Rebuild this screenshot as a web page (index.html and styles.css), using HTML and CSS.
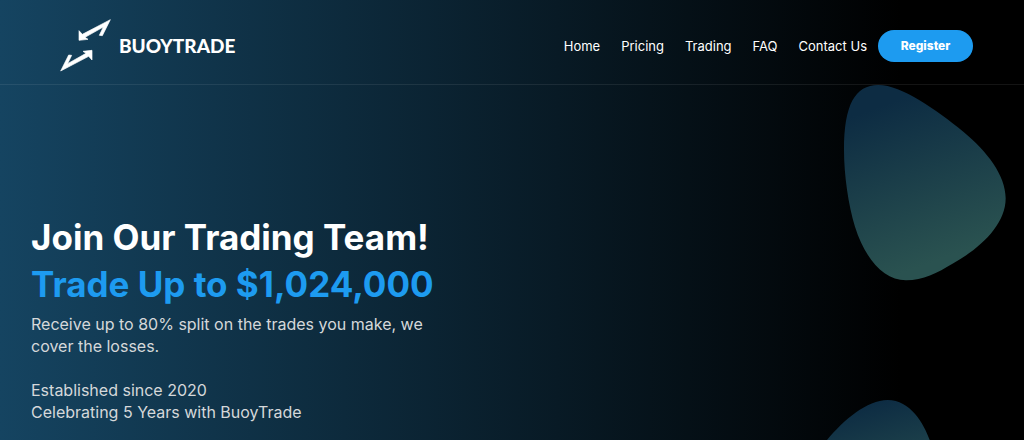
FILE: index.html
```
<!DOCTYPE html>
<html lang="en">
<head>
    <meta charset="UTF-8">
    <meta name="viewport" content="width=device-width, initial-scale=1.0">
    <title>BuoyTrade</title>
    <link rel="stylesheet" href="styles.css">
</head>
<body>
    <header class="header">
        <a href="#" class="logo">
            <svg class="logo-mark" viewBox="30 31 153 159" aria-hidden="true">
                <path d="M181 33 L157 81 L148 80 L160 55 L105 86 L114 92 L87 95 L87 66 L97 77 Z"/>
                <path d="M32 187 L56 139 L65 140 L53 165 L108 134 L99 128 L126 125 L126 154 L116 143 Z"/>
            </svg>
            <span class="logo-text">BUOYTRADE</span>
        </a>
        <div class="menu">
            <nav class="nav">
                <a href="#">Home</a>
                <a href="#">Pricing</a>
                <a href="#">Trading</a>
                <a href="#">FAQ</a>
                <a href="#">Contact Us</a>
            </nav>
            <button type="button" class="register">Register</button>
        </div>
    </header>

    <main class="hero">
        <svg class="blob blob-top" viewBox="72 30 486 587" aria-hidden="true">
            <defs>
                <linearGradient id="blobFill" x1="0.3" y1="0" x2="0.6" y2="1">
                    <stop offset="0.08" stop-color="#0d2c43"/>
                    <stop offset="0.9" stop-color="#2a5250"/>
                </linearGradient>
            </defs>
            <path fill="url(#blobFill)" d="M175 30 C245 30 350 105 430 170 C500 228 557 300 557 370 C557 450 480 520 400 565 C350 595 310 616 258 616 C190 616 135 550 105 455 C85 390 72 300 72 225 C72 90 105 30 175 30 Z"/>
        </svg>
        <svg class="blob blob-bottom" viewBox="14 60 408 381" aria-hidden="true">
            <path fill="url(#blobFill)" d="M262 60 C330 60 370 130 388 180 C420 270 430 400 350 420 C200 450 30 400 20 330 C10 280 50 220 80 180 C130 120 200 60 262 60 Z"/>
        </svg>

        <div class="hero-content">
            <h1>Join Our Trading Team!<br><span class="highlight">Trade Up to $1,024,000</span></h1>
            <p>Receive up to 80% split on the trades you make, we cover the losses.</p>
            <p>Established since 2020<br>Celebrating 5 Years with BuoyTrade</p>
        </div>
    </main>
</body>
</html>
```
FILE: styles.css
```
* {
    box-sizing: border-box;
}

body {
    margin: 0;
    min-height: 100vh;
    display: flex;
    flex-direction: column;
    font-family: 'Inter', sans-serif;
    color: #fff;
    background: linear-gradient(90deg, #154461 0%, #000 88%);
}

.header {
    display: flex;
    justify-content: space-between;
    align-items: center;
    padding: 19px 51px 12px 60px;
    border-bottom: 1px solid rgba(255, 255, 255, 0.08);
}

.logo {
    display: flex;
    align-items: center;
    gap: 8px;
    color: #fff;
    text-decoration: none;
}

.logo-mark {
    width: 51px;
    height: 53px;
    fill: #fff;
    stroke: #fff;
    stroke-width: 2;
}

.logo-text {
    font-family: 'Lato', sans-serif;
    font-size: 19px;
    font-weight: 900;
}

.menu {
    display: flex;
    align-items: center;
    gap: 11px;
}

.nav {
    display: flex;
    gap: 21px;
}

.nav a {
    color: #fff;
    font-size: 13px;
    text-decoration: none;
}

.register {
    width: 95px;
    height: 32px;
    border: none;
    border-radius: 16px;
    background-color: #1d9bf0;
    color: #fff;
    font-family: inherit;
    font-size: 12px;
    font-weight: 800;
    cursor: pointer;
}

.hero {
    position: relative;
    flex: 1;
    overflow: hidden;
    padding: 129px 31px 16px;
}

.hero-content {
    position: relative;
    max-width: 410px;
}

h1 {
    margin: 0 0 5px;
    font-size: 35px;
    font-weight: 700;
    line-height: 47px;
    white-space: nowrap;
}

.highlight {
    color: #1d9bf0;
}

p {
    margin: 0 0 22px;
    color: #d5d8da;
    font-size: 16px;
    line-height: 22px;
}

p:last-child {
    margin-bottom: 0;
}

/* background shapes */
.blob {
    position: absolute;
}

.blob-top {
    top: 0;
    right: 18px;
    width: 162px;
}

.blob-bottom {
    top: 315px;
    right: 83px;
    width: 136px;
}
```
